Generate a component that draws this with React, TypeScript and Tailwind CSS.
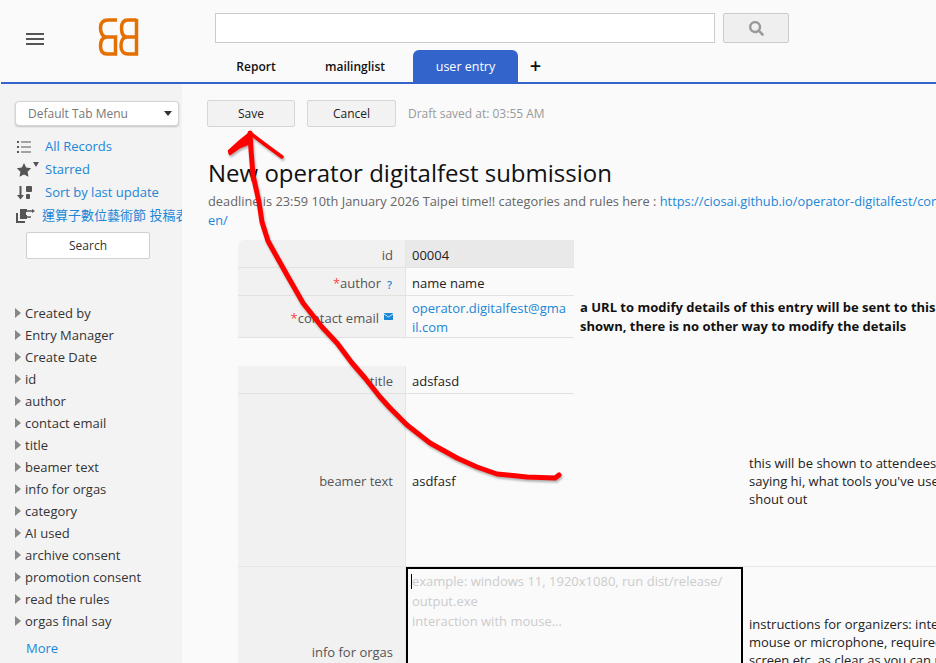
import React from 'react';
import { FaSearch } from 'react-icons/fa';

const fields = ['Created by', 'Entry Manager', 'Create Date', 'id', 'author', 'contact email', 'title', 'beamer text', 'info for orgas', 'category', 'AI used', 'archive consent', 'promotion consent', 'read the rules', 'orgas final say'];

const Sidebar: React.FC = () => (
  <aside className="w-[182px] shrink-0 bg-[#f3f3f3] pl-[15px] pt-[17px] overflow-hidden">
    <div className="w-[164px] h-[25px] bg-white border border-[#d4d4d4] rounded-[4px] shadow-[0_1px_2px_rgba(0,0,0,0.2)] flex items-center pl-[12px] text-[12px] text-[#777] relative">
      Default Tab Menu
      <span className="absolute right-[6px] top-[9px] w-0 h-0 border-l-[4px] border-r-[4px] border-t-[5px] border-l-transparent border-r-transparent border-t-[#333]" />
    </div>
    <div className="mt-[9px] text-[13px] text-[#1a86d8]">
      <div className="h-[23px] flex items-center">
        <span className="w-[30px] pl-[2px] shrink-0">
          <svg width="14" height="12" viewBox="0 0 14 12" fill="#555">
            <path d="M0 0h2v2H0zM0 5h2v2H0zM0 10h2v2H0zM4 .5h10v1H4zM4 5.5h10v1H4zM4 10.5h10v1H4z" />
          </svg>
        </span>
        All Records
      </div>
      <div className="h-[23px] flex items-center">
        <span className="w-[30px] pl-[1px] shrink-0">
          <svg width="24" height="16" viewBox="0 0 24 16" fill="#555">
            <path d="M8 1l2.200 4.600 5 .7-3.600 3.500.9 5L8 12.400l-4.500 2.400.9-5L.8 6.300l5-.7z" />
            <path d="M17 0h6l-3 5z" />
          </svg>
        </span>
        Starred
      </div>
      <div className="h-[23px] flex items-center">
        <span className="w-[30px] pl-[2px] shrink-0">
          <svg width="15" height="15" viewBox="0 0 15 15" fill="#555">
            <path d="M2.500 1h2v9H7l-3.500 4.500L0 10h2.500z" />
            <rect x="9" y="1" width="6" height="6" rx="1" />
            <rect x="9" y="9" width="4" height="5" rx="1" />
          </svg>
        </span>
        Sort by last update
      </div>
      <div className="h-[23px] flex items-center whitespace-nowrap overflow-hidden">
        <span className="w-[27px] shrink-0 pl-[1px]">
          <svg width="20" height="16" viewBox="0 0 20 16" fill="none">
            <path d="M1 5v9h8" stroke="#555" strokeWidth="2" />
            <path d="M4 1h7v3h-1v3h1v4H4z" fill="#555" />
            <path d="M11 3h6M11 9h4" stroke="#555" strokeWidth="1.500" />
            <path d="M16 1l3 2-3 2z" fill="#555" />
          </svg>
        </span>
        <span className="font-['Open_Sans','Noto_Sans_CJK_TC',sans-serif]">運算子數位藝術節 投稿表單</span>
      </div>
    </div>
    <div className="mt-[5px] ml-[11px] w-[124px] h-[27px] bg-white border border-[#d0d0d0] rounded-[2px] flex items-center justify-center text-[12px] text-[#333]">Search</div>
    <div className="mt-[44px] text-[13px] text-[#333]">
      {fields.map((f) => (
        <div key={f} className="h-[22px] flex items-center">
          <span className="w-[10px] mb-[3px] shrink-0">
            <span className="block w-0 h-0 border-t-[5px] border-b-[5px] border-l-[6px] border-t-transparent border-b-transparent border-l-[#888]" />
          </span>
          {f}
        </div>
      ))}
    </div>
    <div className="mt-[6px] ml-[11px] text-[13px] text-[#1a86d8]">More</div>
  </aside>
);

const Label: React.FC<{ children: React.ReactNode; className?: string }> = ({ children, className }) => (
  <div className={`w-[168px] shrink-0 bg-[#f1f1f1] border-r border-[#e6e6e6] pr-[12px] flex justify-end text-[13px] text-[#555] ${className ?? ''}`}>{children}</div>
);

const shaft = 'M559 475 L555 478 L527 477 L497 474 L477 467 L457 458 L430 443 L407 425 L390 408 L380 397 L365 378 L352 363 L337 343 L322 327 L303 303 L287 275 L273 250 L268 241 L262 222 L259 202 L253 175 L251 150 L250 133';

const App: React.FC = () => (
  <div className="w-[936px] h-[663px] overflow-hidden relative bg-[#fafafa] text-[#222] font-['Open_Sans',sans-serif]">
    <header className="h-[84px] relative flex">
      <div className="w-[215px] shrink-0 relative">
        <div className="absolute left-[26px] top-[33px] w-[18px] flex flex-col gap-[3px]">
          <span className="h-[2px] bg-[#555]" /><span className="h-[2px] bg-[#555]" /><span className="h-[2px] bg-[#555]" />
        </div>
        <svg className="absolute left-[97px] top-[17px]" width="42" height="40" viewBox="97 17 42 40" fill="none" stroke="#e56f00" strokeWidth="3.500">
          <path d="M117 20H108C102 20 100.500 24 100.500 28C100.500 33 103 37 106 37H115.500V54H107C102 54 100.500 50 100.500 46C100.500 41 102 38 106 37" />
          <path d="M136.500 19V54H128C123 54 121 50 121 46C121 41 123 37 127 37H136.500M136.500 20H128C123 20 121.500 24 121.500 28C121.500 33 123 37 127 37" />
        </svg>
      </div>
      <div>
        <div className="mt-[13px] flex gap-[8px]">
          <div className="w-[500px] h-[30px] bg-white border border-[#ccc]" />
          <div className="w-[66px] h-[30px] bg-[#efefef] border border-[#ccc] rounded-[2px] flex items-center justify-center">
            <FaSearch size={15} className="text-[#999]" />
          </div>
        </div>
        <div className="mt-[7px] flex items-end h-[32px] text-[12px] font-semibold text-[#111]">
          <div className="w-[81px] pl-[1px] pt-[2px] h-[32px] flex items-center justify-center">Report</div>
          <div className="w-[117px] pl-[1px] pt-[2px] h-[32px] flex items-center justify-center">mailinglist</div>
          <div className="w-[105px] h-[32px] pt-[2px] bg-[#3264cc] text-white font-normal rounded-t-[6px] flex items-center justify-center text-[12.500px]">user entry</div>
          <div className="w-[35px] h-[32px] flex items-center justify-center text-[20px] font-semibold">+</div>
        </div>
      </div>
      <div className="absolute left-[1px] right-0 bottom-0 h-[2px] bg-[#3264cc]" />
    </header>
    <div className="flex h-[579px]">
      <Sidebar />
      <main className="flex-1 pl-[25px] pt-[16px] overflow-hidden">
        <div className="flex items-center gap-[12px] text-[12px] text-[#222]">
          <div className="w-[88px] h-[27px] bg-[#f2f2f2] border border-[#d6d6d6] rounded-[2px] flex items-center justify-center">Save</div>
          <div className="w-[89px] h-[27px] bg-[#f2f2f2] border border-[#d6d6d6] rounded-[2px] flex items-center justify-center">Cancel</div>
          <span className="text-[#999] pt-[1px]">Draft saved at: 03:55 AM</span>
        </div>
        <h1 className="mt-[29px] text-[24px] leading-[33px] text-[#111] ml-[1px] whitespace-nowrap">New operator digitalfest submission</h1>
        <div className="w-[754px] mt-[3px] ml-[1px] text-[12.800px] leading-[19px] text-[#666]">
          <div className="whitespace-nowrap">deadline is 23:59 10th January 2026 Taipei time!! categories and rules here : <span className="text-[#1a86d8]">https://ciosai.github.io/operator-digitalfest/con</span></div>
          <div className="text-[#1a86d8]">en/</div>
        </div>
        <div className="ml-[31px] mt-[10px] w-[900px] text-[13px]">
          <div className="w-[336px] rounded-tl-[6px] overflow-hidden">
            <div className="flex h-[28px] border-b border-[#e2e2e2]">
              <Label className="h-full items-center pt-[4px]">id</Label>
              <div className="flex-1 h-full bg-[#e9e9e9] pl-[6px] pt-[4px] flex items-center">00004</div>
            </div>
            <div className="flex h-[28px] border-b border-[#e2e2e2]">
              <Label className="h-full items-center pt-[4px]">
                <span className="text-[#f44]">*</span>author<span className="text-[#1a86d8] text-[11px] ml-[6px] mt-[3px] font-semibold mr-[1px]">?</span>
              </Label>
              <div className="flex-1 h-full pl-[6px] pt-[4px] flex items-center">name name</div>
            </div>
            <div className="flex h-[42px] border-b border-[#e2e2e2]">
              <Label className="h-full items-center pt-[5px]">
                <span className="text-[#f44]">*</span>contact email
                <svg className="ml-[5px] mb-[5px]" width="9" height="7" viewBox="0 0 9 7">
                  <rect width="9" height="7" rx="0.500" fill="#1a86d8" />
                  <path d="M0 1l4.500 3L9 1" stroke="#fff" strokeWidth="0.800" fill="none" />
                </svg>
              </Label>
              <div className="flex-1 h-full pl-[6px] pr-[8px] pt-[3px] flex items-center leading-[19px] text-[#1a86d8] break-all">operator.digitalfest@gmail.com</div>
            </div>
          </div>
          <div className="absolute left-[580px] top-[298px] text-[13px] leading-[19px] font-bold text-[#111] whitespace-nowrap">
            <div>a URL to modify details of this entry will be sent to this email address, if not</div>
            <div>shown, there is no other way to modify the details</div>
          </div>
          <div className="mt-[28px] flex h-[28px] w-[336px] border-b border-[#e2e2e2]">
            <Label className="h-full items-center pt-[4px]">title</Label>
            <div className="flex-1 pl-[6px] pt-[4px] flex items-center">adsfasd</div>
          </div>
          <div className="flex h-[173px] w-[700px] border-b border-[#e6e6e6]">
            <Label className="h-full items-center pt-[3px]">beamer text</Label>
            <div className="pl-[6px] pt-[3px] flex items-center">asdfasf</div>
            <div className="absolute left-[749px] top-[454px] leading-[18px] whitespace-nowrap text-[13px] text-[#222]">
              <div>this will be shown to attendees while</div>
              <div>saying hi, what tools you've used,</div>
              <div>shout out</div>
            </div>
          </div>
          <div className="flex h-[120px]">
            <Label className="h-full pt-[76px]">info for orgas</Label>
            <div className="w-[337px] h-[120px] border-2 border-black bg-[#fafafa] pl-[4px] pt-[2px] text-[13px] leading-[20px] text-[#ccc] relative">
              <span className="absolute left-[3px] top-[5px] w-[1px] h-[15px] bg-black" />
              <div>example: windows 11, 1920x1080, run dist/release/</div>
              <div>output.exe</div>
              <div>interaction with mouse...</div>
            </div>
            <div className="ml-[6px] pt-[48px] leading-[18px] whitespace-nowrap text-[13px] text-[#222]">
              <div>instructions for organizers: interaction</div>
              <div>mouse or microphone, required</div>
              <div>screen etc. as clear as you can using</div>
            </div>
          </div>
        </div>
      </main>
    </div>
    {/* hand drawn red arrow on top of the page */}
    <svg className="absolute left-0 top-0 pointer-events-none drop-shadow-[1px_2px_1px_rgba(0,0,0,0.3)]" width="936" height="663" fill="none" strokeLinecap="round" strokeLinejoin="round">
      <path d={shaft} stroke="#f00" strokeWidth="5" />
      <path d="M250 133 L263 143 L282 157" stroke="#f00" strokeWidth="3.500" />
      <path d="M229 151 L240 141 L250 133 L250 143 L240 147 L230 154 Z" fill="#f00" stroke="#f00" strokeWidth="2.500" />
    </svg>
  </div>
);

export default App;
